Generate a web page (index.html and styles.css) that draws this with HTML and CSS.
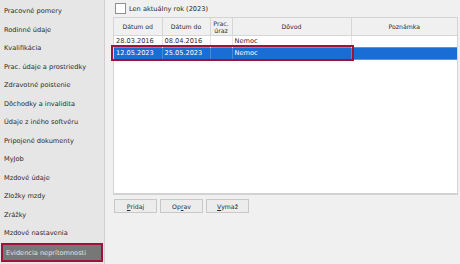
FILE: index.html
```html
<!DOCTYPE html>
<html lang="sk">
<head>
    <meta charset="UTF-8">
    <title>Evidencia neprítomnosti</title>
    <link rel="stylesheet" href="styles.css">
</head>
<body>

<div class="window">
    <ul class="menu">
        <li>Pracovné pomery</li>
        <li>Rodinné údaje</li>
        <li>Kvalifikácia</li>
        <li>Prac. údaje a prostriedky</li>
        <li>Zdravotné poistenie</li>
        <li>Dôchodky a invalidita</li>
        <li>Údaje z iného softvéru</li>
        <li>Pripojené dokumenty</li>
        <li>MyJob</li>
        <li>Mzdové údaje</li>
        <li>Zložky mzdy</li>
        <li>Zrážky</li>
        <li>Mzdové nastavenia</li>
        <li class="active">Evidencia neprítomnosti</li>
    </ul>

    <div class="panel">
        <label class="filter">
            <span class="check"></span>
            Len aktuálny rok (2023)
        </label>

        <div class="grid-box">
            <table class="grid">
                <colgroup>
                    <col class="c-od">
                    <col class="c-do">
                    <col class="c-uraz">
                    <col class="c-dovod">
                    <col>
                </colgroup>
                <thead>
                    <tr>
                        <th>Dátum od</th>
                        <th>Dátum do</th>
                        <th>Prac.<br>úraz</th>
                        <th>Dôvod</th>
                        <th>Poznámka</th>
                    </tr>
                </thead>
                <tbody>
                    <tr>
                        <td>28.03.2016</td>
                        <td>08.04.2016</td>
                        <td></td>
                        <td>Nemoc</td>
                        <td></td>
                    </tr>
                    <tr class="selected">
                        <td>12.05.2023</td>
                        <td>25.05.2023</td>
                        <td></td>
                        <td>Nemoc</td>
                        <td></td>
                    </tr>
                </tbody>
            </table>
            <!-- highlight frame round the selected row -->
            <div class="row-mark"></div>
        </div>

        <div class="actions">
            <button><u>P</u>ridaj</button>
            <button>Op<u>r</u>av</button>
            <button><u>V</u>ymaž</button>
        </div>
    </div>
</div>

</body>
</html>
```

FILE: styles.css
```css
body {
    margin: 0;
    font-family: "DejaVu Sans", Tahoma, sans-serif;
    font-size: 6.6px;
    color: #2b2b2b;
    background-color: #f0f0f0;
}

.window {
    display: flex;
    width: 460px;
    height: 264px;
    overflow: hidden;
}

/* Left menu */
.menu {
    list-style: none;
    margin: 0;
    padding: 2px 0 0 0;
    width: 104px;
    flex-shrink: 0;
    background-color: #e6e6e6;
    border-right: 1px solid #cfcfcf;
}

.menu li {
    height: 18.5px;
    line-height: 18.5px;
    padding-left: 4px;
    white-space: nowrap;
}

.menu li.active {
    box-sizing: border-box;
    margin: 0 1px 0 1px;
    padding-left: 3px;
    background-color: #777777;
    color: #e4e4e4;
    border: 2px solid #a0123a;
    line-height: 16px;
    height: 19.5px;
}

/* Right panel */
.panel {
    flex: 1;
    padding: 3px 0 0 8px;
}

.filter {
    display: flex;
    align-items: center;
    gap: 3px;
    height: 11px;
    margin-left: 2px;
}

.check {
    width: 9px;
    height: 9px;
    background-color: #fff;
    border: 1px solid #8f8f8f;
}

.grid-box {
    position: relative;
    margin-top: 3px;
    width: 345px;
    height: 178px;
    background-color: #fff;
    border: 1px solid #d4d4d4;
    border-bottom: 2px solid #d2d2d2;
    box-sizing: border-box;
}

.grid {
    width: 100%;
    border-collapse: collapse;
    table-layout: fixed;
}

.c-od { width: 48px; }
.c-do { width: 48px; }
.c-uraz { width: 22px; }
.c-dovod { width: 119px; }

.grid th {
    height: 17px;
    padding: 0;
    font-weight: normal;
    font-size: 6.2px;
    line-height: 7px;
    background-color: #f0f0f0;
    border-right: 1px solid #d6d6d6;
    border-bottom: 1px solid #d6d6d6;
    text-align: center;
}

.grid td {
    height: 11px;
    padding: 0 0 0 2px;
    border-right: 1px solid #e3e3e3;
    line-height: 11px;
    white-space: nowrap;
}

.grid th:last-child,
.grid td:last-child {
    border-right: none;
}

.grid tr.selected td {
    background-color: #1a6dd4;
    color: #fff;
    border-top: 1px solid #5b93dc;
    border-bottom: 1px solid #5b93dc;
    border-right-color: #4a88d8;
}

.row-mark {
    position: absolute;
    left: -3px;
    top: 27px;
    width: 239px;
    height: 12px;
    border: 2px solid #a0123a;
}

/* Buttons */
.actions {
    display: flex;
    gap: 3px;
    margin-top: 4px;
    margin-left: 1px;
}

.actions button {
    width: 43px;
    height: 14px;
    padding: 0;
    font-family: inherit;
    font-size: 6.2px;
    color: #2b2b2b;
    background-color: #ececec;
    border: 1px solid #c8c8c8;
    border-radius: 0;
}
```
